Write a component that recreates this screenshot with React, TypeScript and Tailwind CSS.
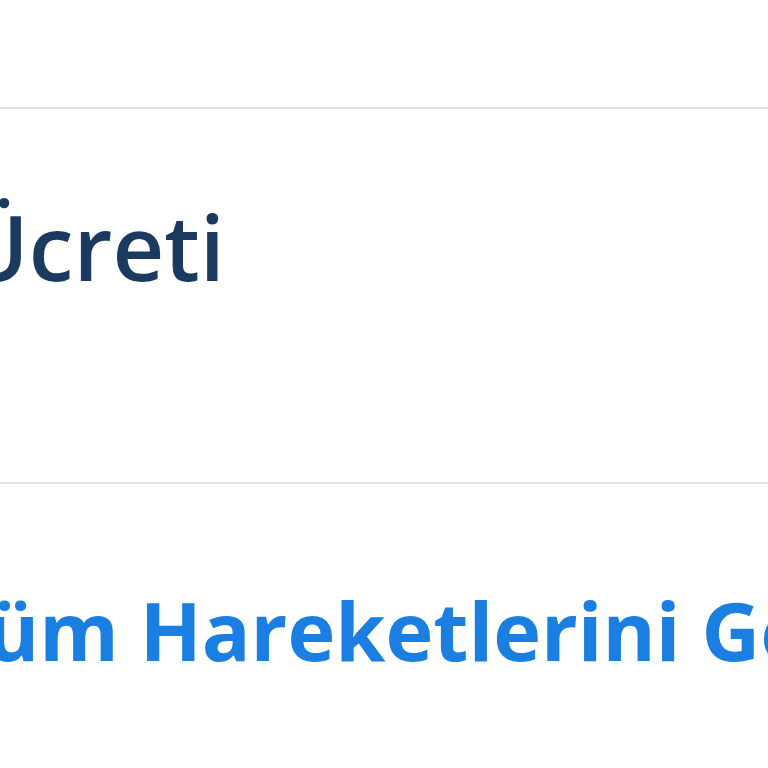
export default function App() {
  return (
    <div className="w-[768px] h-[768px] overflow-hidden bg-white" style={{ fontFamily: '"Open Sans", sans-serif' }}>
      <div className="h-[107px]" />
      <div className="h-[2px] bg-[#dfe3e5]" />
      <div className="h-[373px] pt-[92px]">
        <p className="ml-[-38px] whitespace-nowrap text-[90px] leading-none font-semibold text-[#1b3a5f]">Ücreti</p>
      </div>
      <div className="h-[2px] bg-[#e3e3e3]" />
      <div className="pt-[105px]">
        <p className="ml-[-61px] whitespace-nowrap text-[81px] leading-none font-bold text-[#1a7fe0]">Tüm Hareketlerini Gör</p>
      </div>
    </div>
  );
}
